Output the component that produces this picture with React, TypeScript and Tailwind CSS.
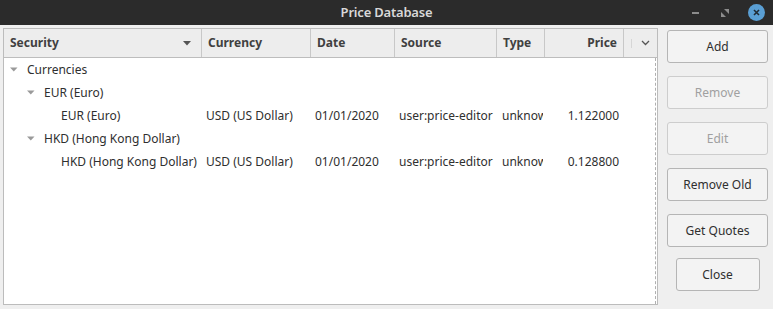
import React from "react";

const Tri = ({ color = "#9a9a9a" }: { color?: string }) => (
  <svg width="8" height="5" viewBox="0 0 8 5" className="shrink-0">
    <path d="M0 0.5 L7.5 0.5 L3.75 4.5 Z" fill={color} />
  </svg>
);

type Row = {
  level: number;
  expandable?: boolean;
  security: string;
  currency?: string;
  date?: string;
  source?: string;
  type?: string;
  price?: string;
};

const rows: Row[] = [
  { level: 0, expandable: true, security: "Currencies" },
  { level: 1, expandable: true, security: "EUR (Euro)" },
  {
    level: 2,
    security: "EUR (Euro)",
    currency: "USD (US Dollar)",
    date: "01/01/2020",
    source: "user:price-editor",
    type: "unknown",
    price: "1.122000",
  },
  { level: 1, expandable: true, security: "HKD (Hong Kong Dollar)" },
  {
    level: 2,
    security: "HKD (Hong Kong Dollar)",
    currency: "USD (US Dollar)",
    date: "01/01/2020",
    source: "user:price-editor",
    type: "unknown",
    price: "0.128800",
  },
];

const Btn = ({
  label,
  disabled,
  className = "",
}: {
  label: string;
  disabled?: boolean;
  className?: string;
}) => (
  <div
    className={
      "h-[33px] flex items-center justify-center rounded-[3px] border bg-[#f3f3f3] text-[12px] " +
      (disabled
        ? "border-[#cdcdcd] text-[#a0a0a0] "
        : "border-[#b5b5b5] text-[#2f2f2f] ") +
      className
    }
  >
    {label}
  </div>
);

export default function App() {
  return (
    <div
      className="w-[773px] h-[309px] bg-[#efefef] flex flex-col overflow-hidden"
      style={{ fontFamily: '"Noto Sans", "Open Sans", sans-serif' }}
    >
      {/* Title bar */}
      <div className="h-[25px] bg-[#2b2b2b] flex items-center relative shrink-0">
        <div className="flex-1 text-center text-[13px] font-semibold text-[#d8d8d8] tracking-[-0.2px]">
          Price Database
        </div>
        <div className="absolute right-[8px] top-0 h-[25px] flex items-center">
          <div className="w-[7px] h-[2px] bg-[#8c8c8c] mr-[22px]" />
          <svg width="8" height="8" viewBox="0 0 8 8" className="mr-[19px]">
            <path d="M3 0 L8 0 L8 5 Z" fill="#8c8c8c" />
            <path d="M0 3 L5 8 L0 8 Z" fill="#8c8c8c" />
          </svg>
          <div className="w-[17px] h-[17px] rounded-full bg-[#5a9fd4] flex items-center justify-center">
            <svg width="7" height="7" viewBox="0 0 7 7">
              <path d="M1 1 L6 6 M6 1 L1 6" stroke="#1f2a33" strokeWidth="1.6" />
            </svg>
          </div>
        </div>
      </div>

      {/* Body */}
      <div className="flex pt-[3px] pl-[3px]">
        {/* Tree */}
        <div className="w-[655px] h-[277px] border border-[#bcbcbc] bg-white flex flex-col">
          {/* Header */}
          <div className="h-[29px] bg-[#ededed] border-b border-[#bdbdbd] flex text-[12px] font-bold text-[#404040] shrink-0">
            <div className="w-[198px] border-r border-[#c8c8c8] flex items-center pl-[6px] pr-[10px]">
              <span className="flex-1">Security</span>
              <svg width="8" height="5" viewBox="0 0 8 5">
                <path d="M0 0 L8 0 L4 4.5 Z" fill="#555" />
              </svg>
            </div>
            <div className="w-[109px] border-r border-[#c8c8c8] flex items-center pl-[6px]">
              Currency
            </div>
            <div className="w-[84px] border-r border-[#c8c8c8] flex items-center pl-[6px]">
              Date
            </div>
            <div className="w-[102px] border-r border-[#c8c8c8] flex items-center pl-[6px]">
              Source
            </div>
            <div className="w-[48px] border-r border-[#c8c8c8] flex items-center pl-[6px]">
              Type
            </div>
            <div className="w-[79px] border-r border-[#c8c8c8] flex items-center justify-end pr-[6px]">
              Price
            </div>
            <div className="flex-1 flex items-center">
              <div className="w-[1px] h-[9px] bg-[#d6d6d6] ml-[7px]" />
              <svg width="9" height="6" viewBox="0 0 9 6" className="ml-[9px]">
                <path d="M1 1 L4.5 4.5 L8 1" stroke="#555" strokeWidth="1.3" fill="none" />
              </svg>
            </div>
          </div>
          {/* Rows */}
          <div className="flex-1 flex">
            <div className="flex-1 flex flex-col text-[12px] text-[#2f2f2f]">
              {rows.map((r, i) => (
                <div key={i} className="h-[23px] flex items-center">
                  <div
                    className="w-[198px] flex items-center overflow-hidden whitespace-nowrap"
                    style={{ paddingLeft: 6 + r.level * 17 }}
                  >
                    {r.expandable ? (
                      <>
                        <Tri />
                        <span className="ml-[9px]">{r.security}</span>
                      </>
                    ) : (
                      <span className="ml-[17px]">{r.security}</span>
                    )}
                  </div>
                  {!r.expandable && (
                    <>
                      <div className="w-[109px] pl-[4px] whitespace-nowrap overflow-hidden">
                        {r.currency}
                      </div>
                      <div className="w-[84px] pl-[4px] whitespace-nowrap overflow-hidden">
                        {r.date}
                      </div>
                      <div className="w-[102px] pl-[4px] whitespace-nowrap overflow-hidden">
                        {r.source}
                      </div>
                      <div className="w-[48px] pl-[5px] whitespace-nowrap overflow-hidden">
                        <span className="block overflow-hidden w-[41px]">{r.type}</span>
                      </div>
                      <div className="w-[79px] pr-[5px] text-right whitespace-nowrap">
                        {r.price}
                      </div>
                    </>
                  )}
                </div>
              ))}
            </div>
            <div className="w-[2px] border-r border-dashed border-[#b0b0b0] mr-[1px]" />
          </div>
        </div>

        {/* Buttons */}
        <div className="ml-[9px] w-[101px] pt-[2px] flex flex-col gap-[13px]">
          <Btn label="Add" />
          <Btn label="Remove" disabled />
          <Btn label="Edit" disabled />
          <Btn label="Remove Old" />
          <Btn label="Get Quotes" />
          <div className="flex justify-center -mt-[2px]">
            <Btn label="Close" className="w-[84px]" />
          </div>
        </div>
      </div>
    </div>
  );
}
